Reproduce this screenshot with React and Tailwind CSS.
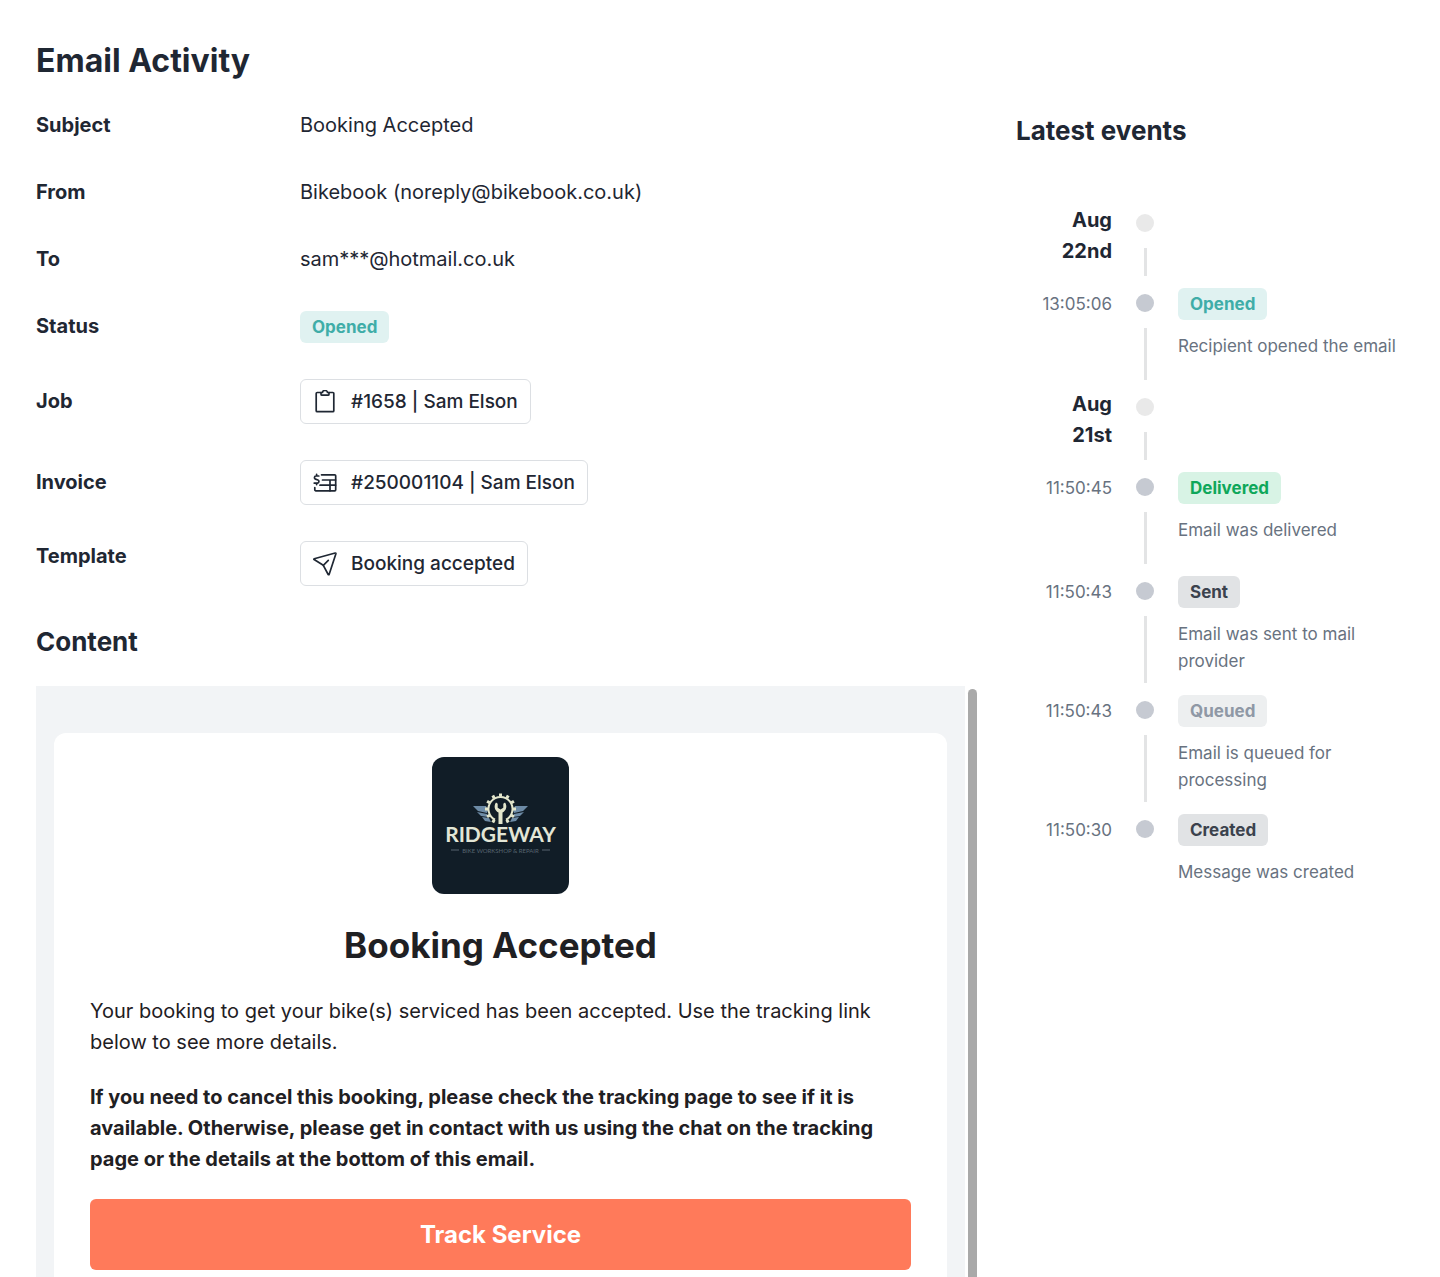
import React from "react";

const details = [
  { label: "Subject", value: "Booking Accepted" },
  { label: "From", value: "Bikebook (noreply@bikebook.co.uk)" },
  { label: "To", value: "sam***@hotmail.co.uk" },
];

const links = [
  { label: "Job", icon: ClipboardIcon, text: "#1658 | Sam Elson" },
  { label: "Invoice", icon: InvoiceIcon, text: "#250001104 | Sam Elson" },
  { label: "Template", icon: SendIcon, text: "Booking accepted", top: true },
];

const badgeStyles = {
  Opened: "bg-[#e0f2f1] text-[#3fada8]",
  Delivered: "bg-[#d8f3e5] text-[#0ea75a]",
  Sent: "bg-[#e1e3e5] text-[#3b424d]",
  Queued: "bg-[#edeff0] text-[#8f98a5]",
  Created: "bg-[#e1e3e5] text-[#3b424d]",
};

const days = [
  {
    month: "Aug",
    day: "22nd",
    events: [{ time: "13:05:06", status: "Opened", text: "Recipient opened the email" }],
  },
  {
    month: "Aug",
    day: "21st",
    events: [
      { time: "11:50:45", status: "Delivered", text: "Email was delivered" },
      { time: "11:50:43", status: "Sent", text: "Email was sent to mail provider" },
      { time: "11:50:43", status: "Queued", text: "Email is queued for processing" },
      { time: "11:50:30", status: "Created", text: "Message was created", last: true },
    ],
  },
];

function ClipboardIcon() {
  return (
    <svg viewBox="0 0 24 24" className="size-6" fill="none" stroke="currentColor" strokeWidth="1.7" strokeLinecap="round" strokeLinejoin="round">
      <path d="M8 2.500H4.200a1 1 0 0 0-1 1v17.200a1 1 0 0 0 1 1h15.600a1 1 0 0 0 1-1V3.500a1 1 0 0 0-1-1H16" />
      <path d="M8 2.500v1.700a1 1 0 0 0 1 1h6a1 1 0 0 0 1-1V2.500h-1.500a2.500 2 0 0 0-5 0z" />
    </svg>
  );
}

function InvoiceIcon() {
  return (
    <svg viewBox="0 0 24 24" className="size-6" fill="none" stroke="currentColor" strokeWidth="1.7" strokeLinecap="round" strokeLinejoin="round">
      <path d="M8.500 3.800h13.200a1 1 0 0 1 1 1v14a1 1 0 0 1-1 1H2.800a1 1 0 0 1-1-1v-2.300" />
      <path d="M9.500 9h13M7 14.200h15.500M17 9v10.800" />
      <path d="M5.800 5H2.900a1.600 1.600 0 0 0-.4 3.100l2.400.9a1.600 1.600 0 0 1-.4 3.100H1.200M3.600 3.400V5M3.600 12.100v1.500" />
    </svg>
  );
}

function SendIcon() {
  return (
    <svg viewBox="0 0 24 24" className="size-6" fill="none" stroke="currentColor" strokeWidth="1.7" strokeLinecap="round" strokeLinejoin="round">
      <path d="M22.200 1L1.200 6.700a.5.5 0 0 0-.1.900L10.300 13.300l4.900 9.200a.5.5 0 0 0 .9-.1L22.900 1.700a.6.6 0 0 0-.7-.7z" />
      <path d="M10.300 13.300l5-4.900" />
    </svg>
  );
}

const teeth = [0, 30, 60, 90, 120, 150, 210, 240, 270, 300, 330];

function RidgewayLogo() {
  return (
    <svg viewBox="0 0 137 137" className="mx-auto size-[137px] rounded-xl bg-[#111d27]" role="img" aria-label="Ridgeway">
      <g fill="#6d8ba6">
        <path d="M41 49h13l2 4-1 3-9-2zM45 55l10 2 1 3-7-1zM50 60l7 1 2 4-6-1z" />
        <path d="M96 49H83l-2 4 1 3 9-2zM92 55l-10 2-1 3 7-1zM87 60l-7 1-2 4 6-1z" />
      </g>
      <g stroke="#e3e6cc" fill="none">
        <path d="M63 62.700a12 12 0 1 1 11 0" strokeWidth="2" />
        {teeth.map((angle) => (
          <path key={angle} d="M68.500 39.500v-3" strokeWidth="3" transform={`rotate(${angle} 68.500 52)`} />
        ))}
      </g>
      <path d="M66.500 67V55.500c-4-2-5-6.500-2.500-10l1.700 1.200v4l2.800 1.800 2.800-1.800v-4l1.700-1.200c2.500 3.500 1.500 8-2.500 10V67z" fill="#e3e6cc" />
      <text x="68.500" y="85" textAnchor="middle" fontFamily="Lato" fontWeight="700" fontSize="21" fill="#e3e6d6">
        RIDGEWAY
      </text>
      <path d="M19 93h8M110 93h8" stroke="#586570" />
      <text x="68.500" y="96" textAnchor="middle" fontFamily="Lato" fontSize="6" fill="#586570">
        BIKE WORKSHOP &amp; REPAIR
      </text>
    </svg>
  );
}

const Badge = ({ status }) => (
  <span className={`inline-block rounded-md px-3 text-[17px] leading-8 font-bold ${badgeStyles[status]}`}>
    {status}
  </span>
);

const Event = ({ time, status, text, last }) => (
  <li className="flex min-h-[104px] gap-6">
    <time className="w-24 shrink-0 text-right text-[17px] leading-8 text-[#687280]">{time}</time>
    <div className="flex w-[18px] shrink-0 flex-col items-center pt-[6px]">
      <span className="size-[18px] rounded-full bg-[#c6cad2]" />
      {!last && <span className="mt-4 mb-3 w-[3px] flex-1 bg-[#e3e4e5]" />}
    </div>
    <div className="pb-5">
      <Badge status={status} />
      <p className="mt-[13px] text-[17px] leading-[27px] text-[#687280]">{text}</p>
    </div>
  </li>
);

const Timeline = () => (
  <ol className="mt-[57px]">
    {days.map((group) => (
      <li key={group.day}>
        <div className="flex h-20 gap-6">
          <h3 className="-mt-[3px] w-24 shrink-0 pl-8 text-right text-xl leading-[31px] font-bold">
            {group.month} {group.day}
          </h3>
          <div className="flex w-[18px] flex-col items-center pt-[6px]">
            <span className="size-[18px] rounded-full bg-[#e9e9e9]" />
            <span className="mt-4 mb-3 w-[3px] flex-1 bg-[#e3e4e5]" />
          </div>
        </div>
        <ol>
          {group.events.map((event) => (
            <Event key={event.status} {...event} />
          ))}
        </ol>
      </li>
    ))}
  </ol>
);

const EmailPreview = () => (
  <div className="flex min-h-0 flex-1 gap-[3px]">
    <div className="flex-1 overflow-y-auto bg-[#f2f4f6] px-[18px] pt-[47px] [scrollbar-width:none]">
      <article className="rounded-xl bg-white px-9 pt-6 pb-9 text-xl leading-[31px] text-[#1f2023]">
        <RidgewayLogo />
        <h2 className="my-[27px] text-center text-[35px] leading-[48px] font-bold">Booking Accepted</h2>
        <p className="mb-6">
          Your booking to get your bike(s) serviced has been accepted. Use the tracking link below to
          see more details.
        </p>
        <p className="mb-6 font-bold">
          If you need to cancel this booking, please check the tracking page to see if it is
          available. Otherwise, please get in contact with us using the chat on the tracking page or
          the details at the bottom of this email.
        </p>
        <a href="#track" className="block rounded-md bg-[#ff7a5a] text-center text-2xl leading-[71px] font-bold text-white">
          Track Service
        </a>
      </article>
    </div>
    <div className="mt-[3px] w-[9px] rounded-t-full bg-[#a9a9a9]" />
  </div>
);

const App = () => {
  return (
    <main className="flex h-screen gap-[39px] overflow-hidden bg-white px-9 font-['Inter',sans-serif] text-[#1f2733]">
      <section className="flex min-w-0 flex-1 flex-col">
        <h1 className="mt-9 mb-6 text-[32px] leading-[50px] font-bold">Email Activity</h1>
        <dl className="grid gap-9 text-xl leading-[31px]">
          {details.map(({ label, value }) => (
            <div key={label} className="flex">
              <dt className="w-[264px] font-bold">{label}</dt>
              <dd>{value}</dd>
            </div>
          ))}
          <div className="flex">
            <dt className="w-[264px] font-bold">Status</dt>
            <dd className="flex">
              <Badge status="Opened" />
            </dd>
          </div>
          {links.map(({ label, icon: Icon, text, top }) => (
            <div key={label} className={top ? "flex items-start" : "flex items-center"}>
              <dt className="w-[264px] font-bold">{label}</dt>
              <dd>
                <button className="flex h-[45px] items-center gap-[14px] rounded-md border border-[#dcdfe3] px-3 text-[19px] font-medium">
                  <Icon />
                  {text}
                </button>
              </dd>
            </div>
          ))}
        </dl>
        <h2 className="mt-9 mb-6 text-[26px] leading-[40px] font-bold">Content</h2>
        <EmailPreview />
      </section>
      <aside className="w-[388px] shrink-0 pt-[111px]">
        <h2 className="text-[26px] leading-[40px] font-bold">Latest events</h2>
        <Timeline />
      </aside>
    </main>
  );
};

export default App;
